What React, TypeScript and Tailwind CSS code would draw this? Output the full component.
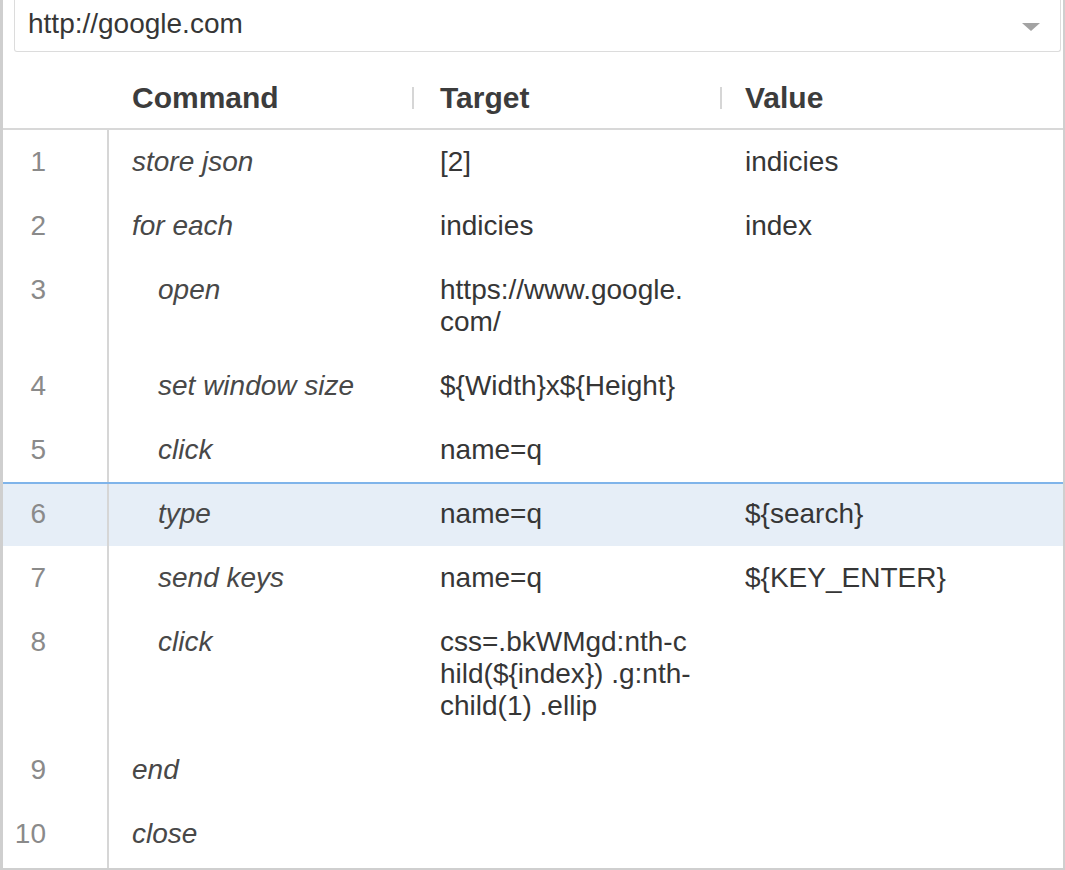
const rows = [
  { cmd: "store json", target: "[2]", value: "indicies", level: 0 },
  { cmd: "for each", target: "indicies", value: "index", level: 0 },
  { cmd: "open", target: "https://www.google.com/", value: "", level: 1 },
  { cmd: "set window size", target: "${Width}x${Height}", value: "", level: 1 },
  { cmd: "click", target: "name=q", value: "", level: 1 },
  { cmd: "type", target: "name=q", value: "${search}", level: 1, selected: true },
  { cmd: "send keys", target: "name=q", value: "${KEY_ENTER}", level: 1 },
  {
    cmd: "click",
    target: "css=.bkWMgd:nth-child(${index}) .g:nth-child(1) .ellip",
    value: "",
    level: 1,
  },
  { cmd: "end", target: "", value: "", level: 0 },
  { cmd: "close", target: "", value: "", level: 0 },
];

export default function App() {
  return (
    <div
      className="flex h-[870px] w-[1065px] flex-col overflow-hidden border-b-2 border-l-[3px] border-r-2 border-[#cfcfcf] bg-white text-[28px] leading-[32px] text-[#363636]"
      style={{ fontFamily: '"Liberation Sans", Arial, sans-serif' }}
    >
      {/* url picker */}
      <div className="ml-[11px] mr-[2px] flex h-[52px] items-start justify-between rounded-b-[3px] border-x border-b border-[#dcdcdc] pl-[13px] pr-[20px] pt-[8px]">
        <span>http://google.com</span>
        <svg width="18" height="8" viewBox="0 0 18 8" className="mt-[15px]">
          <path d="M0 0 L18 0 L9 8 Z" fill="#a3a3a3" />
        </svg>
      </div>

      {/* header */}
      <div className="flex h-[78px] items-start border-b-2 border-[#d8d8d8] pt-[30px] text-[30px] font-bold text-[#3c3c3c]">
        <div className="w-[106px] shrink-0" />
        <div className="w-[303px] shrink-0 pl-[23px]">Command</div>
        <div className="flex w-[308px] shrink-0 items-center">
          <span className="h-[22px] w-[2px] bg-[#d6d6d6]" />
          <span className="pl-[26px]">Target</span>
        </div>
        <div className="flex flex-1 items-center">
          <span className="h-[22px] w-[2px] bg-[#d6d6d6]" />
          <span className="pl-[23px]">Value</span>
        </div>
      </div>

      {/* rows */}
      <div className="flex flex-1 flex-col">
        {rows.map((r, i) => (
          <div
            key={i}
            className={
              r.selected
                ? "flex border-t-2 border-[#7fb4ea] bg-[#e6eef7]"
                : "flex"
            }
          >
            <div
              className={
                r.selected
                  ? "w-[106px] shrink-0 border-r-2 border-[#d6d6d6] pb-[16px] pt-[14px]"
                  : "w-[106px] shrink-0 border-r-2 border-[#d6d6d6] py-[16px]"
              }
            >
              <div className="w-[43px] text-right text-[#8a8a8a]">{i + 1}</div>
            </div>
            <div
              className={
                r.selected
                  ? "w-[303px] shrink-0 pb-[16px] pt-[14px] italic text-[#484848]"
                  : "w-[303px] shrink-0 py-[16px] italic text-[#484848]"
              }
            >
              <div className={r.level ? "pl-[49px]" : "pl-[23px]"}>{r.cmd}</div>
            </div>
            <div
              className={
                r.selected
                  ? "w-[308px] shrink-0 pb-[16px] pl-[28px] pt-[14px]"
                  : "w-[308px] shrink-0 py-[16px] pl-[28px]"
              }
            >
              <div className="w-[254px] break-all">{r.target}</div>
            </div>
            <div
              className={
                r.selected
                  ? "flex-1 pb-[16px] pl-[25px] pt-[14px]"
                  : "flex-1 py-[16px] pl-[25px]"
              }
            >
              {r.value}
            </div>
          </div>
        ))}
        <div className="flex flex-1">
          <div className="w-[106px] shrink-0 border-r-2 border-[#d6d6d6]" />
        </div>
      </div>
    </div>
  );
}
